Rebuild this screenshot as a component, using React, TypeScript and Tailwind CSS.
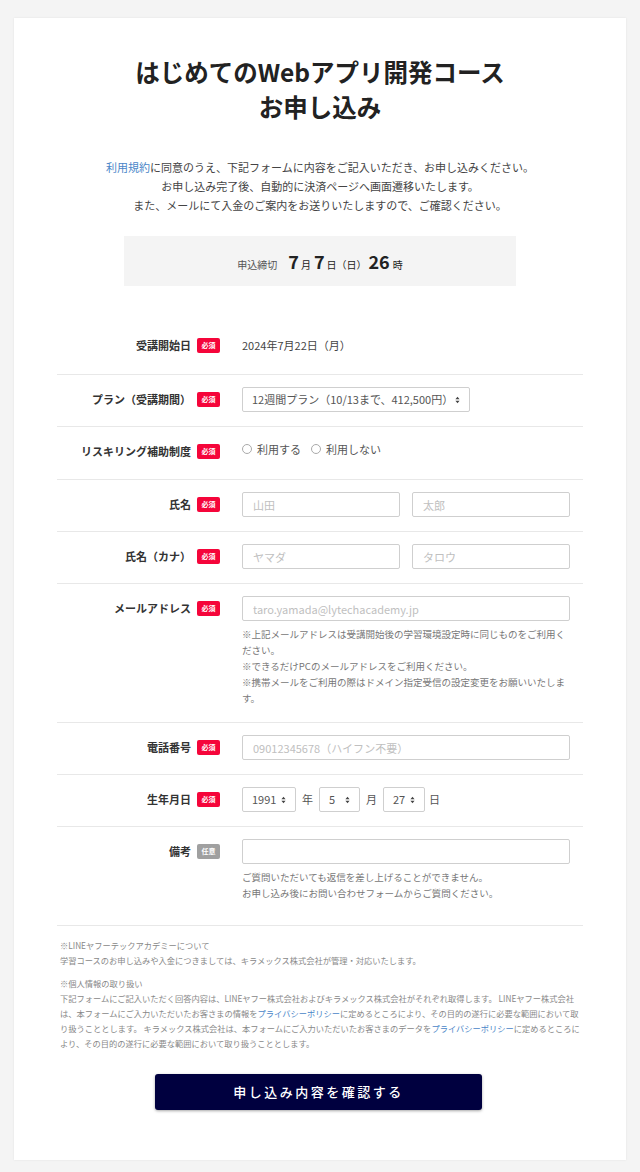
import type { ReactNode } from "react";

function Badge({ optional = false }: { optional?: boolean }) {
  return (
    <span
      className={`flex h-[15px] w-[23px] shrink-0 items-center justify-center rounded-[2px] text-[7px] font-bold leading-none text-white ${
        optional ? "bg-[#a0a0a0]" : "bg-[#f5053a]"
      }`}
    >
      {optional ? "任意" : "必須"}
    </span>
  );
}

function Row({
  label,
  optional = false,
  pb = "pb-[14px]",
  children,
}: {
  label: string;
  optional?: boolean;
  pb?: string;
  children: ReactNode;
}) {
  return (
    <div className={`flex border-b border-[#e8e8e8] pt-[12px] ${pb}`}>
      <div className="flex h-[25px] w-[163px] shrink-0 items-center justify-end gap-[6px]">
        <span className="text-[11px] font-bold text-[#333]">{label}</span>
        <Badge optional={optional} />
      </div>
      <div className="ml-[22px] w-[328px]">{children}</div>
    </div>
  );
}

function Arrows() {
  return (
    <svg viewBox="0 0 6 9" width="5" height="8" className="shrink-0">
      <path d="M3 0.5L5.5 3.5H0.5Z M3 8.5L0.5 5.5H5.5Z" fill="#444" />
    </svg>
  );
}

function FakeSelect({ value, className }: { value: string; className: string }) {
  return (
    <div
      className={`flex h-[25px] items-center justify-between rounded-[2px] border border-[#cfcfcf] bg-white pl-[9px] pr-[9px] text-[11px] text-[#555] ${className}`}
    >
      <span>{value}</span>
      <Arrows />
    </div>
  );
}

function TextInput({ placeholder = "", className = "w-full" }: { placeholder?: string; className?: string }) {
  return (
    <input
      readOnly
      placeholder={placeholder}
      className={`block h-[25px] rounded-[2px] border border-[#cfcfcf] bg-white px-[10px] text-[11px] text-[#555] outline-none placeholder:text-[#c0c0c0] ${className}`}
    />
  );
}

function Notes({ lines }: { lines: string[] }) {
  return (
    <div className="mt-[5px] mb-[2px] text-[9.5px] leading-[16px] text-[#777]">
      {lines.map((l) => (
        <p key={l}>{l}</p>
      ))}
    </div>
  );
}

function Radio({ label }: { label: string }) {
  return (
    <span className="flex items-center gap-[5px]">
      <span className="h-[10px] w-[10px] rounded-full border border-[#aaa] bg-white" />
      <span className="text-[11px] text-[#555]">{label}</span>
    </span>
  );
}

export default function App() {
  return (
    <div className="min-h-[1172px] bg-[#f4f4f4] px-[14px] pt-[18px] pb-[12px] font-['Noto_Sans_CJK_JP','Noto_Sans',sans-serif]">
      <div className="bg-white pt-[36px] pb-[50px] shadow-[0_0_2px_rgba(0,0,0,0.08)]">
        <h1 className="text-center text-[24.5px] font-bold leading-[35px] text-[#222]">
          はじめてのWebアプリ開発コース
          <br />
          お申し込み
        </h1>

        <div className="mt-[34px] text-center text-[11px] leading-[19px] text-[#444]">
          <p>
            <span className="text-[#4a86c8]">利用規約</span>
            に同意のうえ、下記フォームに内容をご記入いただき、お申し込みください。
          </p>
          <p>お申し込み完了後、自動的に決済ページへ画面遷移いたします。</p>
          <p>また、メールにて入金のご案内をお送りいたしますので、ご確認ください。</p>
        </div>

        <div className="mx-auto mt-[21px] flex h-[50px] w-[392px] items-center justify-center bg-[#f4f4f4] text-[#222]">
          <div className="flex items-baseline">
            <span className="mr-[11px] text-[10px] text-[#555]">申込締切</span>
            <span className="text-[18px] font-semibold">7</span>
            <span className="ml-[2px] mr-[3px] text-[10px]">月</span>
            <span className="text-[18px] font-semibold">7</span>
            <span className="ml-[2px] text-[10px]">日（日）</span>
            <span className="ml-[2px] text-[18px] font-semibold">26</span>
            <span className="ml-[3px] text-[10px]">時</span>
          </div>
        </div>

        <div className="mx-[43px] mt-[35px]">
          <Row label="受講開始日" pb="pb-[16px]">
            <div className="flex h-[25px] items-center text-[11px] text-[#444]">2024年7月22日（月）</div>
          </Row>

          <Row label="プラン（受講期間）">
            <FakeSelect value="12週間プラン（10/13まで、412,500円）" className="w-[228px]" />
          </Row>

          <Row label="リスキリング補助制度" pb="pb-[15px]">
            <div className="flex h-[20px] items-center gap-[10px]">
              <Radio label="利用する" />
              <Radio label="利用しない" />
            </div>
          </Row>

          <Row label="氏名">
            <div className="flex gap-[12px]">
              <TextInput placeholder="山田" className="w-[158px]" />
              <TextInput placeholder="太郎" className="w-[158px]" />
            </div>
          </Row>

          <Row label="氏名（カナ）">
            <div className="flex gap-[12px]">
              <TextInput placeholder="ヤマダ" className="w-[158px]" />
              <TextInput placeholder="タロウ" className="w-[158px]" />
            </div>
          </Row>

          <Row label="メールアドレス">
            <TextInput placeholder="taro.yamada@lytechacademy.jp" />
            <Notes
              lines={[
                "※上記メールアドレスは受講開始後の学習環境設定時に同じものをご利用ください。",
                "※できるだけPCのメールアドレスをご利用ください。",
                "※携帯メールをご利用の際はドメイン指定受信の設定変更をお願いいたします。",
              ]}
            />
          </Row>

          <Row label="電話番号">
            <TextInput placeholder="09012345678（ハイフン不要）" />
          </Row>

          <Row label="生年月日">
            <div className="flex items-center text-[11px] text-[#555]">
              <FakeSelect value="1991" className="w-[54px]" />
              <span className="mx-[6px]">年</span>
              <FakeSelect value="5" className="w-[41px]" />
              <span className="mx-[6px]">月</span>
              <FakeSelect value="27" className="w-[42px]" />
              <span className="ml-[4px]">日</span>
            </div>
          </Row>

          <Row label="備考" optional pb="pb-[22px]">
            <TextInput />
            <Notes
              lines={[
                "ご質問いただいても返信を差し上げることができません。",
                "お申し込み後にお問い合わせフォームからご質問ください。",
              ]}
            />
          </Row>

          <div className="mt-[12px] pl-[3px] text-[8.25px] leading-[15px] text-[#888]">
            <p>※LINEヤフーテックアカデミーについて</p>
            <p>学習コースのお申し込みや入金につきましては、キラメックス株式会社が管理・対応いたします。</p>
            <p className="mt-[8px]">※個人情報の取り扱い</p>
            <p>
              下記フォームにご記入いただく回答内容は、LINEヤフー株式会社およびキラメックス株式会社がそれぞれ取得します。
              LINEヤフー株式会社は、本フォームにご入力いただいたお客さまの情報を
              <span className="text-[#4a86c8]">プライバシーポリシー</span>
              に定めるところにより、その目的の遂行に必要な範囲において取り扱うこととします。
              キラメックス株式会社は、本フォームにご入力いただいたお客さまのデータを
              <span className="text-[#4a86c8]">プライバシーポリシー</span>
              に定めるところにより、その目的の遂行に必要な範囲において取り扱うこととします。
            </p>
          </div>

          <div className="mt-[23px] flex justify-center">
            <button className="-ml-[3px] h-[36px] w-[327px] rounded-[3px] bg-[#00003f] text-[13px] font-medium tracking-[2.5px] text-white shadow-[0_1px_3px_rgba(0,0,0,0.35)]">
              申し込み内容を確認する
            </button>
          </div>
        </div>
      </div>
    </div>
  );
}
